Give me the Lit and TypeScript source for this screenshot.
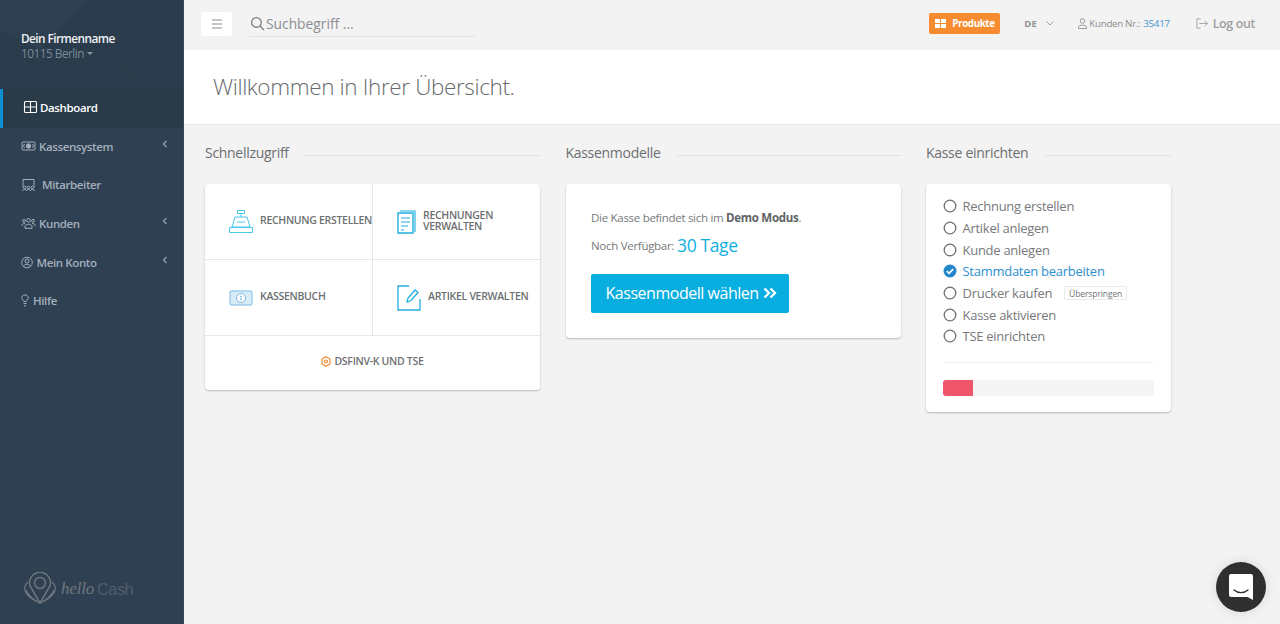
import { LitElement, html, css, svg } from "lit";
import { customElement } from "lit/decorators.js";

const chev = html`<svg class="chev" width="6" height="8" viewBox="0 0 6 8" fill="none" stroke="currentColor" stroke-width="1.3"><path d="M4.500 1 1.500 4l3 3"/></svg>`;

const navIcons = {
  dash: svg`<path d="M1.500 2.500a1 1 0 0 1 1-1h10a1 1 0 0 1 1 1v9a1 1 0 0 1-1 1h-10a1 1 0 0 1-1-1zM7.500 1.500v11M1.500 7h12" />`,
  cash: svg`<path d="M2 3h11a1 1 0 0 1 1 1v6a1 1 0 0 1-1 1H2a1 1 0 0 1-1-1V4a1 1 0 0 1 1-1z"/><circle cx="7.500" cy="7" r="2.200" fill="currentColor"/><path d="M3.500 5 2.500 7l1 2M11.500 5l1 2-1 2"/>`,
  staff: svg`<path d="M2 9V2.500h11V9M1 10h1M13 10h1"/><circle cx="3.700" cy="10.500" r="1.300"/><circle cx="7.500" cy="10.500" r="1.300"/><circle cx="11.300" cy="10.500" r="1.300"/><path d="M1.500 14c0-2 4-2 4.200 0M5.400 14c0-2 4-2 4.200 0M9.300 14c0-2 4-2 4.200 0"/>`,
  users: svg`<circle cx="7.500" cy="4.300" r="1.800"/><circle cx="3" cy="4.800" r="1.400"/><circle cx="12" cy="4.800" r="1.400"/><path d="M4 12.300v-1.800c0-3 7-3 7 0v1.800zM.8 10c0-2 1.700-2.800 3.200-2.300M14.200 10c0-2-1.700-2.800-3.200-2.300"/>`,
  account: svg`<circle cx="6" cy="7.500" r="5.300"/><circle cx="6" cy="6" r="2"/><path d="M2.700 11.500c.6-3 6-3 6.600 0"/>`,
  help: svg`<path d="M.8 4.800C.8 1 7.200 1 7.200 4.800c0 1.800-1.800 2.300-2 3.700h-2.400C2.600 7.100.8 6.600.8 4.800zM2.500 10.500h3M3 12.800h2"/>`,
};

const nav = [
  { label: "Kassensystem", icon: navIcons.cash, w: 18 },
  { label: "Mitarbeiter", icon: navIcons.staff, w: 21 },
  { label: "Kunden", icon: navIcons.users, w: 18 },
  { label: "Mein Konto", icon: navIcons.account, w: 15.5 },
  { label: "Hilfe", icon: navIcons.help, w: 12 },
];
const more = new Set(["Kassensystem", "Kunden", "Mein Konto"]);

const steps = [
  { t: "Rechnung erstellen" },
  { t: "Artikel anlegen" },
  { t: "Kunde anlegen" },
  { t: "Stammdaten bearbeiten", done: true },
  { t: "Drucker kaufen", skip: true },
  { t: "Kasse aktivieren" },
  { t: "TSE einrichten" },
];

@customElement("app-root")
export class AppRoot extends LitElement {
  static styles = css`
    :host { display: flex; width: 100%; height: 624px; overflow: hidden; background: #f3f3f4; font-family: "Open Sans", sans-serif; color: #676a6c; }
    * { box-sizing: border-box; }
    svg { flex: none; }
    aside { width: 184px; flex: none; background: #2f4052; border-right: 1px solid #5c6d7c33; display: flex; flex-direction: column; color: #a7b1c2; }
    .profile { height: 89px; padding: 31px 0 0 21px; background: #2a3b4b; position: relative; overflow: hidden; }
    .profile svg { position: absolute; inset: 0; }
    .profile > div { position: relative; }
    .company { color: #eef1f4; font-size: 11.800px; letter-spacing: -0.55px; font-weight: 600; line-height: 15px; }
    .city { color: #7b8a98; font-size: 11.800px; letter-spacing: -0.5px; line-height: 15px; display: flex; align-items: center; gap: 3px; }
    .caret { width: 0; height: 0; border: 3.500px solid transparent; border-top-color: #8a97a4; border-bottom: 0; }
    .item { height: 38.700px; display: flex; align-items: center; padding: 0 0 2px 21px; font-size: 11.500px; letter-spacing: -0.38px; font-weight: 600; color: #a3afbd; position: relative; }
    .item .slot { flex: none; display: flex; align-items: center; }
    .item.active { background: #293a49; color: #fff; border-left: 3px solid #0a8fd6; padding-left: 20px; }
    .chev { position: absolute; left: 162px; top: 12px; color: #95a2af; }
    .logo { margin-top: auto; height: 60px; padding: 0 0 10px 22px; display: flex; align-items: center; gap: 3px; color: #6d767c; }
    .hello { font-family: "Liberation Serif", serif; font-style: italic; font-size: 17px; letter-spacing: -0.2px; color: #6f777c; }
    .cash { font-family: "Liberation Sans", sans-serif; font-size: 16.500px; color: #4f5d6b; letter-spacing: -0.6px; }

    main { flex: 1; min-width: 0; display: flex; flex-direction: column; }
    .topbar { height: 50px; flex: none; display: flex; align-items: center; padding: 0 25px 3px 17px; }
    .burger { width: 31px; height: 24px; background: #fff; border-radius: 3px; box-shadow: 0 0 1px #e4e4e4; display: flex; align-items: center; justify-content: center; color: #8a8d8f; margin-right: 17px; }
    .search { width: 227px; height: 26px; border-bottom: 1px solid #dfe4e8; display: flex; align-items: center; gap: 1px; padding-left: 1px; color: #8b8e90; font-size: 13.800px; }
    .spacer { flex: 1; }
    .prod { width: 71px; height: 21px; background: #f68c2f; border-radius: 2px; color: #fff; font-size: 9.800px; font-weight: 700; letter-spacing: -0.4px; display: flex; align-items: center; padding-left: 6px; gap: 6px; white-space: nowrap; }
    .lang { font-size: 9.500px; font-weight: 700; color: #8f9294; margin-left: 24px; display: flex; align-items: center; gap: 9px; width: 53px; }
    .cust { font-size: 9.800px; letter-spacing: -0.33px; color: #8b8e90; display: flex; align-items: center; gap: 1px; white-space: nowrap; }
    .cust a { color: #3f97d3; margin-left: 2px; }
    .logout { margin-left: 26px; font-size: 12.500px; letter-spacing: -0.4px; font-weight: 600; color: #9b9ea0; display: flex; align-items: center; gap: 5px; }

    .heading { height: 75px; flex: none; background: #fff; border-bottom: 1px solid #e7eaec; display: flex; align-items: center; padding: 0 0 2px 29px; font-size: 22.500px; letter-spacing: -0.37px; font-weight: 300; color: #676a6c; }
    .cols { display: grid; grid-template-columns: 335px 335px 245px; column-gap: 25.500px; padding: 15px 0 0 21px; align-items: start; }
    .title { height: 25px; display: flex; align-items: center; gap: 16.500px; font-size: 14px; letter-spacing: -0.3px; color: #6c6f71; margin-bottom: 19px; line-height: 20px; }
    .title i { flex: 1; height: 1px; background: #dfe1e2; margin-top: 5px; }
    .card { background: #fff; border-radius: 4px; box-shadow: 0 1px 2px #0000003d; }

    .quick { display: grid; grid-template-columns: 168px 1fr; height: 206px; grid-template-rows: 76px 76px 1fr; }
    .q { display: flex; align-items: center; font-size: 10.500px; letter-spacing: -0.3px; font-weight: 600; line-height: 10.500px; color: #6c6f71; white-space: nowrap; padding-bottom: 2px; }
    .q svg { margin-top: 3px; }
    .q.a { padding-left: 23px; gap: 6px; border-right: 1px solid #e6e7e8; border-bottom: 1px solid #e6e7e8; }
    .q.b { padding-left: 24px; gap: 7px; border-bottom: 1px solid #e6e7e8; }
    .q.c { grid-column: 1 / 3; justify-content: center; gap: 3px; padding-bottom: 4px; }
    .q.c svg { margin-top: 0; }

    .model { padding: 26px 25.500px 26px; height: 154px; font-size: 11.500px; letter-spacing: -0.29px; color: #77797b; }
    .model b { color: #606365; font-weight: 700; }
    .avail { display: flex; align-items: center; gap: 3px; height: 26px; margin-top: 7px; }
    .days { font-size: 17.500px; letter-spacing: -0.4px; color: #0fb0e1; line-height: 26px; }
    .cta { width: 198px; height: 38.500px; background: #09aee0; border-radius: 2px; color: #fff; font-size: 16px; letter-spacing: -0.47px; display: flex; align-items: center; padding-left: 14.500px; gap: 4px; margin-top: 16px; white-space: nowrap; }

    .setup { height: 228px; padding: 11.500px 17px 0 17px; margin-top: 1px; }
    .step { height: 21.700px; display: flex; align-items: center; gap: 5.500px; font-size: 13px; letter-spacing: -0.27px; color: #77797b; }
    .step.done { color: #2c8fd0; }
    .skip { font-size: 8.500px; letter-spacing: -0.1px; border: 1px solid #e9e9e9; border-radius: 2px; height: 14px; width: 63px; display: flex; align-items: center; justify-content: center; margin-left: 6.500px; color: #717376; }
    .sep { height: 1px; background: #f0f0f0; margin-top: 14.500px; }
    .bar { height: 16.500px; background: #f5f5f5; border-radius: 3px; overflow: hidden; margin-top: 17px; }
    .bar div { height: 100%; background: #f0566a; }

    .chat { position: fixed; left: 1216px; top: 562px; width: 50px; height: 50px; border-radius: 50%; background: #2f2f2f; box-shadow: 0 0 12px #0000001f; display: flex; align-items: center; justify-content: center; }
  `;

  render() {
    return html`
      <aside>
        <div class="profile">
          <svg width="183" height="89" viewBox="0 0 183 89"><path d="M70 0 140 89H183V0z" fill="#2b3c4c"/><path d="M0 0h90L40 50 0 30z" fill="#2e3f4f"/></svg>
          <div class="company">Dein Firmenname</div>
          <div class="city">10115 Berlin<span class="caret"></span></div>
        </div>
        <div class="item active">
          <span class="slot" style="width:17px"><svg width="15" height="14" viewBox="0 0 15 14" fill="none" stroke="currentColor" stroke-width="1.100">${navIcons.dash}</svg></span>
          <span>Dashboard</span>
        </div>
        ${nav.map(
          (n) => html`<div class="item">
            <span class="slot" style="width:${n.w}px"><svg width="15" height="15" viewBox="0 0 15 15" fill="none" stroke="currentColor" stroke-width="1">${n.icon}</svg></span>
            <span>${n.label}</span>
            ${more.has(n.label) ? chev : ""}
          </div>`
        )}
        <div class="logo">
          <svg width="36" height="34" viewBox="0 0 36 34" fill="none" stroke="currentColor" stroke-width="1.200">
            <path d="M18 31 8 14a10.500 10.500 0 1 1 20 0z" stroke-width="1.500"/><circle cx="18" cy="11" r="5.500" stroke-width="1.500"/>
            <path d="M6 10C0 15 1 24 18 31 35 24 36 15 30 10M4 18c3 7 8 10 14 13M32 18c-3 7-8 10-14 13"/>
          </svg>
          <span class="hello">hello</span><span class="cash">Cash</span>
        </div>
      </aside>
      <main>
        <div class="topbar">
          <div class="burger"><svg width="12" height="10" viewBox="0 0 12 10" stroke="currentColor" stroke-width="1"><path d="M1 1h10M1 5h10M1 9h10"/></svg></div>
          <div class="search">
            <svg width="15" height="15" viewBox="0 0 14 14" fill="none" stroke="#7b7e80" stroke-width="1.200"><circle cx="6" cy="6" r="4.500"/><path d="m9.300 9.300 3.700 3.700"/></svg>
            <span>Suchbegriff ...</span>
          </div>
          <div class="spacer"></div>
          <div class="prod">
            <svg width="11" height="9" viewBox="0 0 11 9" fill="#fff"><rect width="5" height="4"/><rect x="6" width="5" height="4"/><rect y="5" width="5" height="4"/><rect x="6" y="5" width="5" height="4"/></svg>
            Produkte
          </div>
          <div class="lang">DE <svg width="8" height="5" viewBox="0 0 8 5" fill="none" stroke="#9a9d9f" stroke-width="1"><path d="m.5.500 3.500 3.500L7.500.500"/></svg></div>
          <div class="cust">
            <svg width="11" height="11" viewBox="0 0 11 11" fill="none" stroke="#8f9294" stroke-width=".9"><circle cx="5.500" cy="3" r="2.300"/><path d="M1.500 10.500V9c0-2.500 8-2.500 8 0v1.500z"/></svg>
            Kunden Nr.: <a>35417</a>
          </div>
          <div class="logout">
            <svg width="12" height="11" viewBox="0 0 13 11" fill="none" stroke="#a0a3a5" stroke-width="1"><path d="M5 .500H1v10h4M3.500 5.500h9M9.500 2.500l3 3-3 3"/></svg>
            Log out
          </div>
        </div>
        <div class="heading">Willkommen in Ihrer Übersicht.</div>
        <div class="cols">
          <section>
            <div class="title">Schnellzugriff<i></i></div>
            <div class="card quick">
              <div class="q a">
                <svg width="26" height="26" viewBox="0 0 26 26" fill="none" stroke="#47c8ef" stroke-width="1"><path d="M9.500 1.500h7v3h-7zM13 4.500v3.500M7 8h12l3 10H4zM9 13h8M1.500 18.500h23v5h-23z"/></svg>
                RECHNUNG ERSTELLEN
              </div>
              <div class="q b">
                <svg width="19" height="24" viewBox="0 0 19 24" fill="none" stroke="#1eaede" stroke-width="1.100"><path d="M3 1h15v21"/><path d="M1 3h15v20H1z" stroke-width="1.400"/><path d="M4 8h9M4 12h9M4 16h7M4 20h3"/></svg>
                <span>RECHNUNGEN<br />VERWALTEN</span>
              </div>
              <div class="q a">
                <svg width="26" height="16" viewBox="0 0 26 16" fill="#d8ecf8" stroke="#7cb9e2" stroke-width="1"><rect x="2" y="1" width="22" height="14" rx="1"/><circle cx="13" cy="8" r="4.500" fill="#fff"/><path d="M13 5.500v5M11.700 9.500h2M12 6.500h2" stroke-width=".7"/></svg>
                KASSENBUCH
              </div>
              <div class="q b">
                <svg width="24" height="26" viewBox="0 0 24 26" fill="none" stroke="#22aee0" stroke-width="1.300"><path d="M12 1H1v24h22V14"/><path d="M10 17l1-4 7-8 3 2.500-7 8z"/></svg>
                <span>ARTIKEL VERWALTEN</span>
              </div>
              <div class="q c">
                <svg width="10" height="11" viewBox="0 0 10 11" fill="none" stroke="#f08a2c" stroke-width="1.200"><path d="M5 .800 9 3v5L5 10.200 1 8V3z"/><circle cx="5" cy="5.500" r="1.500"/></svg>
                DSFINV-K UND TSE
              </div>
            </div>
          </section>
          <section>
            <div class="title">Kassenmodelle<i></i></div>
            <div class="card model">
              <div>Die Kasse befindet sich im <b>Demo Modus</b>.</div>
              <div class="avail"><span>Noch Verfügbar:</span> <span class="days">30 Tage</span></div>
              <div class="cta">
                Kassenmodell wählen
                <svg width="14" height="12" viewBox="0 0 14 12" fill="none" stroke="#fff" stroke-width="2.300"><path d="m1.500 1.500 4.500 4.500-4.500 4.500M7.500 1.500 12 6l-4.500 4.500"/></svg>
              </div>
            </div>
          </section>
          <section>
            <div class="title">Kasse einrichten<i></i></div>
            <div class="card setup">
              ${steps.map(
                (s) => html`<div class="step ${s.done ? "done" : ""}">
                  ${s.done
                    ? html`<svg width="14" height="14" viewBox="0 0 14 14"><circle cx="7" cy="7" r="6.500" fill="#2486cb"/><path d="m3.800 7.200 2.300 2.200 4.100-4.300" fill="none" stroke="#fff" stroke-width="1.600"/></svg>`
                    : html`<svg width="14" height="14" viewBox="0 0 14 14" fill="none" stroke="#6d7072" stroke-width="1.300"><circle cx="7" cy="7" r="5.800"/></svg>`}
                  <span>${s.t}</span>
                  ${s.skip ? html`<span class="skip">Überspringen</span>` : ""}
                </div>`
              )}
              <div class="sep"></div>
              <div class="bar"><div style="width:${(30 / 211) * 100}%"></div></div>
            </div>
          </section>
        </div>
      </main>
      <div class="chat">
        <svg width="26" height="28" viewBox="0 0 26 28"><path d="M3 1h20a2 2 0 0 1 2 2v24l-5.500-3H3a2 2 0 0 1-2-2V3a2 2 0 0 1 2-2z" fill="#fff"/><path d="M6 17c4 3.500 10 3.500 14 0" fill="none" stroke="#2f2f2f" stroke-width="1.300" stroke-linecap="round"/></svg>
      </div>
    `;
  }
}
